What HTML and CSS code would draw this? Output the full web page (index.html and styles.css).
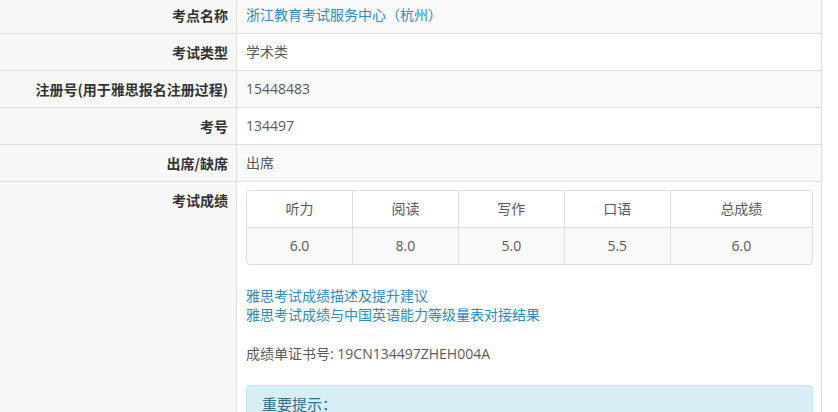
FILE: index.html
```html
<!DOCTYPE html>
<html lang="zh-CN">
<head>
<meta charset="utf-8">
<title>成绩查询</title>
<link rel="stylesheet" href="styles.css">
</head>
<body>
<div class="page">
  <table class="info">
    <tbody>
      <tr class="odd">
        <th>考点名称</th>
        <td><a class="link" href="#">浙江教育考试服务中心（杭州）</a></td>
      </tr>
      <tr>
        <th>考试类型</th>
        <td>学术类</td>
      </tr>
      <tr class="odd">
        <th>注册号(用于雅思报名注册过程)</th>
        <td>15448483</td>
      </tr>
      <tr>
        <th>考号</th>
        <td>134497</td>
      </tr>
      <tr class="odd">
        <th>出席/缺席</th>
        <td>出席</td>
      </tr>
      <tr>
        <th class="top">考试成绩</th>
        <td>
          <div class="scores">
            <div class="sc head">听力</div>
            <div class="sc head">阅读</div>
            <div class="sc head">写作</div>
            <div class="sc head">口语</div>
            <div class="sc head last">总成绩</div>
            <div class="sc val">6.0</div>
            <div class="sc val">8.0</div>
            <div class="sc val">5.0</div>
            <div class="sc val">5.5</div>
            <div class="sc val last">6.0</div>
          </div>
          <p class="links">
            <a class="link" href="#">雅思考试成绩描述及提升建议</a><br>
            <a class="link" href="#">雅思考试成绩与中国英语能力等级量表对接结果</a>
          </p>
          <p class="cert">成绩单证书号: 19CN134497ZHEH004A</p>
          <div class="alert">重要提示：</div>
        </td>
      </tr>
    </tbody>
  </table>
</div>
</body>
</html>
```

FILE: styles.css
```css
html, body {
  margin: 0;
  padding: 0;
  background: #fff;
}
body {
  font-family: "Open Sans", "Noto Sans CJK SC", sans-serif;
  font-size: 14px;
  line-height: 20px;
  color: #5a5a5a;
  overflow: hidden;
}
.page {
  width: 822px;
  margin-top: -3px;
}
.info {
  width: 822px;
  border-collapse: collapse;
  border-right: 1px solid #ddd;
}
.info th,
.info td {
  border-top: 1px solid #ddd;
  padding: 8px;
  vertical-align: middle;
  height: 20px;
}
.info tr:first-child th,
.info tr:first-child td {
  border-top: none;
}
.info th {
  width: 220px;
  text-align: right;
  font-weight: bold;
  color: #333;
  background: #f8f8f8;
  border-right: 1px solid #ddd;
  font-family: "Noto Sans CJK SC", sans-serif;
}
.info th.top {
  vertical-align: top;
}
.info td {
  padding-left: 9px;
  text-align: left;
}
.info tr.odd td {
  background: #f9f9f9;
}
.link {
  color: #2d8cc0;
  text-decoration: none;
}
.scores {
  display: grid;
  grid-template-columns: repeat(4, 1fr) 25%;
  border: 1px solid #ddd;
  border-radius: 4px;
  overflow: hidden;
  margin-bottom: 21px;
}
.sc {
  text-align: center;
  padding: 8px;
  border-right: 1px solid #ddd;
  color: #5a5a5a;
}
.sc.last {
  border-right: none;
}
.sc.head {
  background: #fff;
}
.sc.val {
  background: #f9f9f9;
  border-top: 1px solid #ddd;
}
.links {
  margin: 0 0 20px 0;
  line-height: 19px;
}
.cert {
  margin: 0 0 21px 0;
}
.alert {
  background: #d9edf7;
  border: 1px solid #bce8f1;
  border-radius: 4px;
  padding: 8px 15px 15px 15px;
  color: #31708f;
  font-size: 15px;
  margin-bottom: 20px;
}
```
